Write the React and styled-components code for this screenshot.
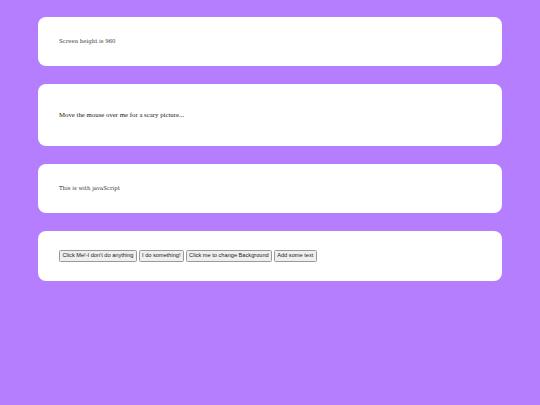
import React from "react";
import styled, { createGlobalStyle } from "styled-components";

const GlobalStyle = createGlobalStyle`
    html, body {
        margin: 0;
        padding: 0;
        background: #b57eff;
    }
`;

const Page = styled.div`
    display: flex;
    flex-direction: column;
    align-items: center;
    gap: 18px;
    padding-top: 17px;
    min-height: 405px;
    box-sizing: border-box;
    background: #b57eff;
`;

const Card = styled.section`
    box-sizing: border-box;
    width: 464px;
    height: ${(p) => p.$height}px;
    padding: 0 21px ${(p) => p.$shift}px;
    background: #ffffff;
    border-radius: 8px;
    display: flex;
    align-items: center;
`;

const Text = styled.p`
    margin: 0;
    font-family: ${(p) =>
        p.$wide
            ? `"DejaVu Serif", Georgia, serif`
            : `"Liberation Serif", "Times New Roman", serif`};
    font-size: ${(p) => (p.$wide ? "5.4px" : "6.8px")};
    line-height: 9px;
    color: ${(p) => (p.$wide ? "#333333" : "#222222")};
`;

const ButtonRow = styled.div`
    display: flex;
    gap: 1.5px;
    align-items: center;
`;

const Button = styled.button`
    font-family: "Liberation Sans", Arial, sans-serif;
    font-size: 5.65px;
    line-height: 7.5px;
    padding: 1px 2.5px;
    color: #222222;
    background: #efefef;
    border: 0.5px solid #999999;
    border-radius: 1.5px;
    cursor: pointer;
`;

export default function App() {
    return (
        <>
            <GlobalStyle />
            <Page>
                <Card $height={49} $shift={1}>
                    <Text $wide>Screen height is 960</Text>
                </Card>
                <Card $height={62} $shift={2}>
                    <Text>Move the mouse over me for a scary picture...</Text>
                </Card>
                <Card $height={49} $shift={1}>
                    <Text $wide>This is with javaScript</Text>
                </Card>
                <Card $height={50} $shift={0}>
                    <ButtonRow>
                        <Button>Click Me!-I don't do anything</Button>
                        <Button>I do something!</Button>
                        <Button>Click me to change Background</Button>
                        <Button>Add some text</Button>
                    </ButtonRow>
                </Card>
            </Page>
        </>
    );
}
